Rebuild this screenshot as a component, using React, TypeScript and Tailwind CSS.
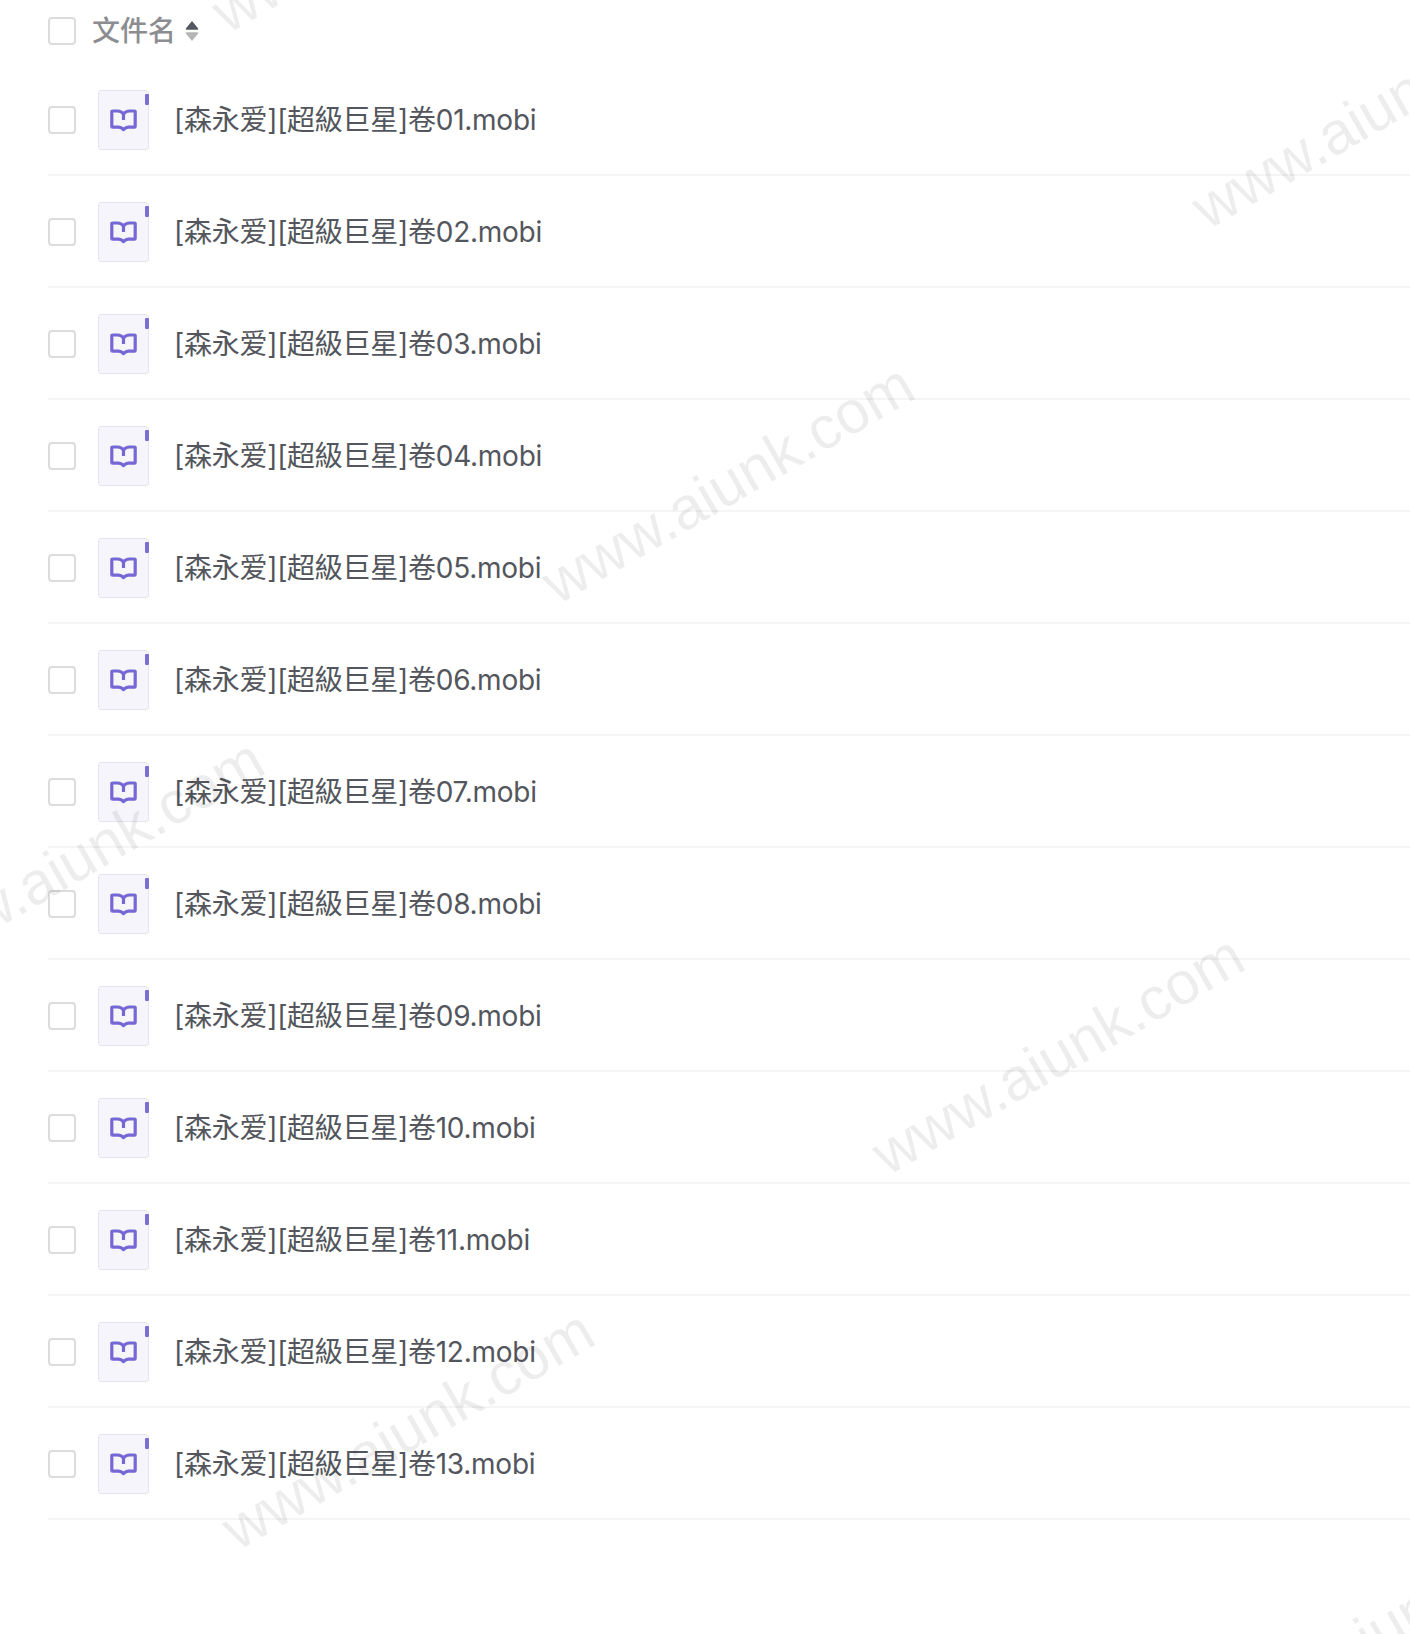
const files = ['01', '02', '03', '04', '05', '06', '07', '08', '09', '10', '11', '12', '13'];

// centres of the repeated diagonal watermark
const marks = [
  { x: 398, y: -87 },
  { x: 1378, y: 109 },
  { x: 728, y: 484 },
  { x: 78, y: 859 },
  { x: 1058, y: 1055 },
  { x: 408, y: 1430 },
  { x: 1388, y: 1626 },
];

function Checkbox() {
  return <div className="h-[28px] w-[28px] shrink-0 rounded-[4px] border-2 border-[#dcdcdc] bg-white" />;
}

function SortIcon() {
  return (
    <svg width="14" height="22" viewBox="0 0 14 22" className="ml-[9px]">
      <path d="M7 1 13 8.2c.5.7 0 1.6-.8 1.6H1.8c-.8 0-1.3-.9-.8-1.6z" fill="#55585e" />
      <path d="M7 21 13 13.8c.5-.7 0-1.6-.8-1.6H1.8c-.8 0-1.3.9-.8 1.6z" fill="#b4b4b4" />
    </svg>
  );
}

function BookFile() {
  return (
    <div className="relative flex h-[60px] w-[51px] shrink-0 items-center justify-center rounded-[3px] border border-[#e6e4f3] bg-[#f6f5fc]">
      <div className="absolute right-[-1px] top-[3px] h-[11px] w-[4px] rounded-[1px] bg-[#7b6fd6]" />
      <svg width="27" height="23" viewBox="0 0 27 23" fill="none" stroke="#7568d4" strokeWidth="3.2" strokeLinejoin="round">
        <path d="M13.5 5C12 3 10 2 7.5 2H2.6c-.5 0-.8.3-.8.8v14.6c0 .5.3.8.8.8h6c2 0 3.4.8 4.9 2.4 1.5-1.6 2.9-2.4 4.9-2.4h6c.5 0 .8-.3.8-.8V2.8c0-.5-.3-.8-.8-.8h-4.9c-2.5 0-4.5 1-6 3z" />
        <path d="M13.5 5v6" />
      </svg>
    </div>
  );
}

function FileRow({ no }: { no: string }) {
  return (
    <div className="flex h-[112px] items-center border-b-2 border-[#f5f5f6] pt-[2px]">
      <Checkbox />
      <div className="ml-[22px]">
        <BookFile />
      </div>
      <span className="ml-[25px] text-[28px] tracking-[-0.26px] text-[#53565c]">[森永爱][超級巨星]卷{no}.mobi</span>
    </div>
  );
}

export default function App() {
  return (
    <div
      className="relative h-[1634px] w-[1410px] overflow-hidden bg-white pl-[48px]"
      style={{ fontFamily: 'Inter, "Noto Sans CJK SC", sans-serif' }}
    >
      <div className="flex h-[64px] items-center pb-[2px]">
        <Checkbox />
        <span className="ml-[16px] text-[28px] font-medium text-[#8c8d90]">文件名</span>
        <SortIcon />
      </div>
      {files.map((no) => (
        <FileRow key={no} no={no} />
      ))}

      {/* watermark */}
      {marks.map((m) => (
        <div
          key={m.x}
          className="pointer-events-none absolute -translate-x-1/2 -translate-y-1/2 -rotate-[30deg] whitespace-nowrap font-['Liberation_Sans'] text-[60px] leading-none text-black/[0.07]"
          style={{ left: m.x, top: m.y }}
        >
          www.aiunk.com
        </div>
      ))}
    </div>
  );
}
